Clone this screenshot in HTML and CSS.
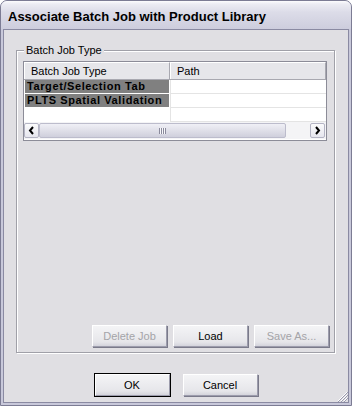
FILE: index.html
```html
<!DOCTYPE html>
<html lang="en">
<head>
    <meta charset="UTF-8">
    <title>Associate Batch Job with Product Library</title>
    <link rel="stylesheet" href="styles.css">
</head>
<body>
    <div class="window">
        <div class="titlebar">
            <span class="title">Associate Batch Job with Product Library</span>
        </div>
        <div class="client">
            <fieldset class="group">
                <legend>Batch Job Type</legend>
                <div class="listview">
                    <div class="lv-header">
                        <div class="hd hd-type">Batch Job Type</div>
                        <div class="hd hd-path">Path</div>
                    </div>
                    <div class="lv-row">
                        <div class="cell cell-type"><span class="sel">Target/Selection Tab</span></div>
                        <div class="cell cell-path"></div>
                    </div>
                    <div class="lv-row">
                        <div class="cell cell-type"><span class="sel">PLTS Spatial Validation</span></div>
                        <div class="cell cell-path"></div>
                    </div>
                    <div class="lv-row">
                        <div class="cell cell-type"></div>
                        <div class="cell cell-path"></div>
                    </div>
                    <div class="hscroll">
                        <div class="sb-btn">
                            <svg width="7" height="9" viewBox="0 0 7 9"><path d="M5 1 L2 4.5 L5 8" fill="none" stroke="#000" stroke-width="2"/></svg>
                        </div>
                        <div class="sb-thumb"><span class="grip"></span></div>
                        <div class="sb-track"></div>
                        <div class="sb-btn">
                            <svg width="7" height="9" viewBox="0 0 7 9"><path d="M2 1 L5 4.5 L2 8" fill="none" stroke="#000" stroke-width="2"/></svg>
                        </div>
                    </div>
                </div>
                <div class="group-buttons">
                    <button class="btn" disabled>Delete Job</button>
                    <button class="btn">Load</button>
                    <button class="btn" disabled>Save As...</button>
                </div>
            </fieldset>
            <div class="dialog-buttons">
                <button class="btn btn-default">OK</button>
                <button class="btn">Cancel</button>
            </div>
            <div class="size-grip">
                <svg width="12" height="12" viewBox="0 0 12 12">
                    <path d="M11 2 L2 11 M11 5 L5 11 M11 8 L8 11" stroke="#fff" stroke-width="1"/>
                    <path d="M12 2 L2 12 M12 5 L5 12 M12 8 L8 12" stroke="#9a9aae" stroke-width="1"/>
                </svg>
            </div>
        </div>
    </div>
</body>
</html>
```

FILE: styles.css
```css
* {
    box-sizing: border-box;
}
body {
    margin: 0;
    background: #fff;
    font-family: "Liberation Sans", Arial, sans-serif;
    font-size: 11px;
    color: #000;
}
.window {
    width: 352px;
    height: 406px;
    display: flex;
    flex-direction: column;
    border: 1px solid #7c7c94;
    border-radius: 7px 7px 0 0;
    background: #c8c8da;
}
.titlebar {
    height: 28px;
    display: flex;
    align-items: center;
    padding: 2px 0 0 7px;
    border-radius: 6px 6px 0 0;
    background: linear-gradient(#fdfdfe 0, #ececf3 3px, #dcdce8 40%, #cdcddd 100%);
}
.title {
    font-weight: 700;
    font-size: 13px;
    color: #000;
}
.client {
    flex: 1;
    margin: 0 2px 2px;
    border: 1px solid #8a8aa2;
    background: #e0dfe3;
    display: flex;
    flex-direction: column;
    position: relative;
}

/* group box */
.group {
    flex: 1;
    margin: 14px 13px 0 12px;
    padding: 0;
    min-width: 0;
    border: 1px solid #a0a0a8;
    box-shadow: inset 1px 1px 0 #fff, 1px 1px 0 #fff;
    display: flex;
    flex-direction: column;
}
.group legend {
    margin-left: 7px;
    padding: 0 2px;
    line-height: 13px;
    background: #e0dfe3;
}

/* list view */
.listview {
    margin: 4px 7px 0 6px;
    height: 80px;
    border: 1px solid #8c8c98;
    background: #fff;
    display: flex;
    flex-direction: column;
}
.lv-header {
    display: flex;
    height: 18px;
    background: #e6e6ea;
    border-bottom: 1px solid #a8a8b0;
}
.hd {
    line-height: 16px;
    padding-left: 6px;
    border-top: 1px solid #fff;
    border-left: 1px solid #fff;
}
.hd-type {
    width: 146px;
    border-right: 1px solid #a8a8b0;
}
.hd-path {
    flex: 1;
    border-right: 1px solid #a8a8b0;
}
.lv-row {
    display: flex;
    height: 14px;
}
.cell {
    border-bottom: 1px solid #e4e4e4;
}
.cell-type {
    width: 146px;
    padding: 0 1px 0 1px;
    border-bottom-color: #fff;
}
.cell-path {
    flex: 1;
    border-left: 1px solid #e4e4e4;
}
.sel {
    display: block;
    height: 13px;
    line-height: 13px;
    padding-left: 2px;
    background: #808080;
    font-weight: 700;
    letter-spacing: 0.6px;
}

/* scrollbar */
.hscroll {
    display: flex;
    height: 17px;
    padding: 1px 1px 1px 0;
    background: #f4f4f6;
}
.sb-btn {
    width: 15px;
    display: flex;
    align-items: center;
    justify-content: center;
    border: 1px solid #b4b4c4;
    border-radius: 2px;
    background: linear-gradient(#fbfbfc, #e6e6ee);
}
.sb-thumb {
    width: 247px;
    display: flex;
    align-items: center;
    justify-content: center;
    border: 1px solid #bcbccc;
    border-radius: 2px;
    background: linear-gradient(#f0f0f6, #dcdce6 60%, #cfcfdc);
}
.grip {
    width: 7px;
    height: 6px;
    background: repeating-linear-gradient(90deg, #8a8a9c 0 1px, #f8f8fa 1px 2px);
}
.sb-track {
    flex: 1;
}

/* buttons */
.group-buttons {
    margin-top: auto;
    display: flex;
    justify-content: flex-end;
    gap: 6px;
    padding: 0 5px 5px 0;
}
.dialog-buttons {
    display: flex;
    justify-content: center;
    gap: 13px;
    margin: 21px 0 6px;
}
.btn {
    width: 75px;
    height: 22px;
    padding: 0;
    font-family: "Liberation Sans", Arial, sans-serif;
    font-size: 11px;
    color: #000;
    border: 1px solid #fff;
    border-right-color: #9c9cac;
    border-bottom-color: #9c9cac;
    border-radius: 0;
    background: linear-gradient(#f4f4f6, #e6e6ea 80%, #d4d4dc);
    box-shadow: 1px 1px 0 #7a7a8a;
}
.btn:disabled {
    color: #a4a4a8;
}
.btn-default {
    outline: 1px solid #000;
}
.size-grip {
    position: absolute;
    right: 0;
    bottom: 0;
    width: 12px;
    height: 12px;
}
```
